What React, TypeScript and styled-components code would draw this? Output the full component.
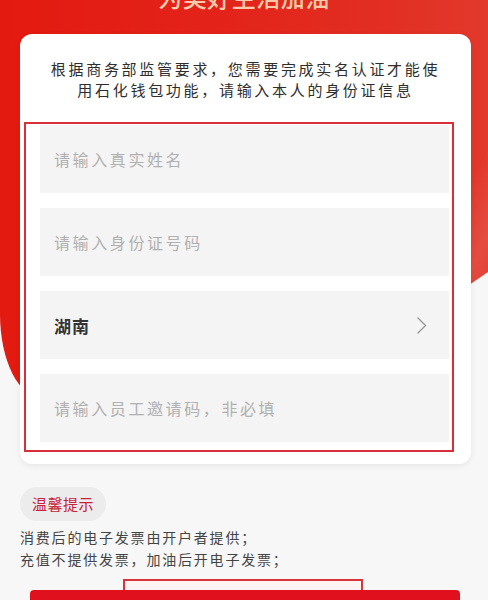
import React from "react";
import styled, { createGlobalStyle } from "styled-components";

const GlobalStyle = createGlobalStyle`
  html, body { margin: 0; padding: 0; }
  body {
    background: #f7f7f7;
    font-family: "Noto Sans CJK SC", "Noto Sans", sans-serif;
  }
  * { box-sizing: border-box; }
`;

const Page = styled.div`
  position: relative;
  width: 488px;
  height: 600px;
  overflow: hidden;
  background: #f7f7f7;
`;

const RedBackdrop = styled.div`
  position: absolute;
  top: 0;
  left: 0;
  width: 100%;
  height: 398px;
  background:
    linear-gradient(120deg, rgba(255,255,255,0) 80%, rgba(255,255,255,0.1) 87%, rgba(255,255,255,0) 93%),
    linear-gradient(to right, #e31a10 0%, #e3231a 45%, #e22f23 80%, #e2392c 100%);
  border-bottom-left-radius: 42px 84px;
  clip-path: polygon(0 0, 100% 0, 100% 272px, calc(100% - 16px) 283px, calc(100% - 140px) 100%, 0 100%);
`;

const Content = styled.div`
  position: relative;
  z-index: 1;
  display: flex;
  flex-direction: column;
`;

const Title = styled.div`
  margin-top: -16px;
  height: 26px;
  text-align: center;
  font-size: 24px;
  line-height: 26px;
  letter-spacing: 0.5px;
  color: #f8cba8;
  font-weight: 500;
`;

const Card = styled.div`
  margin: 24px 0 0 20px;
  width: 451px;
  height: 430px;
  background: #fff;
  border-radius: 12px;
  box-shadow: 0 2px 6px rgba(0, 0, 0, 0.07);
  padding: 24px 0 0 4px;
  display: flex;
  flex-direction: column;
`;

const Notice = styled.p`
  margin: 0 0 0 -4px;
  text-align: center;
  font-size: 15px;
  line-height: 21px;
  letter-spacing: 2.7px;
  color: #2e2e2e;
`;

const Highlight = styled.div`
  margin-top: 22px;
  width: 430px;
  height: 330px;
  border: 2px solid #d8303a;
  padding: 1px 3px 0 14px;
  display: flex;
  flex-direction: column;
  gap: 15px;
`;

const Field = styled.div<{ $filled?: boolean }>`
  height: 68px;
  background: #f4f4f4;
  display: flex;
  align-items: center;
  justify-content: space-between;
  padding: 0 22px 0 14px;
  font-size: ${(p) => (p.$filled ? "17px" : "16px")};
  font-weight: ${(p) => (p.$filled ? 700 : 400)};
  letter-spacing: ${(p) => (p.$filled ? "1px" : "2.6px")};
  color: ${(p) => (p.$filled ? "#333" : "#b0b0b0")};
`;

const Tips = styled.div`
  margin: 23px 0 0 20px;
  display: flex;
  flex-direction: column;
  align-items: flex-start;
`;

const TipBadge = styled.div`
  height: 34px;
  padding: 0 12px;
  border-radius: 17px;
  background: #ececec;
  color: #c8213b;
  font-size: 15px;
  line-height: 34px;
  letter-spacing: 0.5px;
`;

const TipLine = styled.p`
  margin: 0;
  font-size: 14px;
  line-height: 22px;
  letter-spacing: 1.8px;
  color: #444;
`;

const TipList = styled.div`
  margin-top: 5px;
`;

const Footer = styled.div`
  position: relative;
  margin: 20px 0 0 30px;
  width: 430px;
  height: 30px;
`;

const MarkBox = styled.div`
  position: absolute;
  left: 93px;
  top: -11px;
  width: 240px;
  height: 30px;
  border: 2px solid #d6363a;
  background: #fdf3f2;
  z-index: 0;
`;

const SubmitButton = styled.div`
  position: relative;
  z-index: 1;
  height: 30px;
  border-radius: 4px 4px 0 0;
  background: #e0101c;
`;

const Chevron = () => (
  <svg width="11" height="19" viewBox="0 0 11 19" fill="none">
    <polyline points="1.5,1.5 9.5,9.5 1.5,17.5" stroke="#9a9a9a" strokeWidth="1.4" />
  </svg>
);

export default function App() {
  return (
    <>
      <GlobalStyle />
      <Page>
        <RedBackdrop />
        <Content>
          <Title>为美好生活加油</Title>
          <Card>
            <Notice>
              根据商务部监管要求，您需要完成实名认证才能使
              <br />
              用石化钱包功能，请输入本人的身份证信息
            </Notice>
            <Highlight>
              <Field>请输入真实姓名</Field>
              <Field>请输入身份证号码</Field>
              <Field $filled>
                湖南
                <Chevron />
              </Field>
              <Field>请输入员工邀请码，非必填</Field>
            </Highlight>
          </Card>
          <Tips>
            <TipBadge>温馨提示</TipBadge>
            <TipList>
              <TipLine>消费后的电子发票由开户者提供；</TipLine>
              <TipLine>充值不提供发票，加油后开电子发票；</TipLine>
            </TipList>
          </Tips>
          <Footer>
            <MarkBox />
            <SubmitButton />
          </Footer>
        </Content>
      </Page>
    </>
  );
}
